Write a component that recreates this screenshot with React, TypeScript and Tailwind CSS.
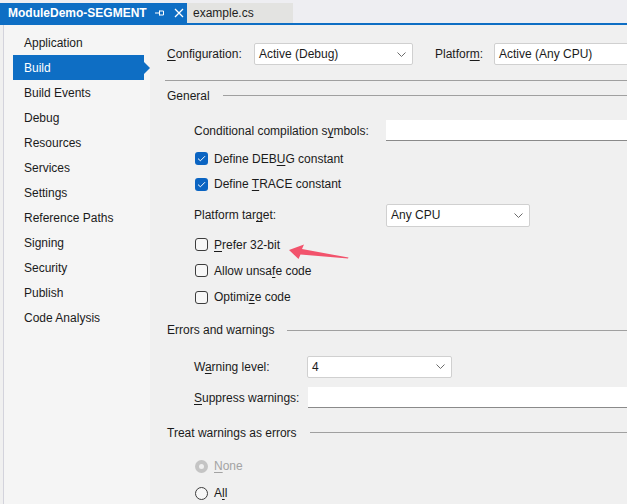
import React from 'react';

const font = { fontFamily: '"Liberation Sans", Arial, sans-serif' };

const navItems = [
  'Application',
  'Build',
  'Build Events',
  'Debug',
  'Resources',
  'Services',
  'Settings',
  'Reference Paths',
  'Signing',
  'Security',
  'Publish',
  'Code Analysis',
];

// access-key underline
const K: React.FC<{ children: React.ReactNode }> = ({ children }) => (
  <span className="underline underline-offset-2 decoration-1">{children}</span>
);

const Chevron = () => (
  <svg width="9" height="5" viewBox="0 0 9 5" className="shrink-0">
    <path d="M0.5 0.5 L4.5 4.5 L8.5 0.5" fill="none" stroke="#6b6b6b" strokeWidth="1" />
  </svg>
);

const Select: React.FC<{ value: string; className: string }> = ({ value, className }) => (
  <div
    className={`flex items-center justify-between bg-white border border-[#d0d0d0] rounded-[2px] pl-[4px] pr-[6px] text-[#1b1b1b] shrink-0 ${className}`}
  >
    <span>{value}</span>
    <Chevron />
  </div>
);

const TextBox: React.FC<{ className: string }> = ({ className }) => (
  <div className={`bg-white border-b border-[#8a8a8a] shrink-0 ${className}`} />
);

const Check: React.FC<{ checked?: boolean; children: React.ReactNode; className?: string }> = ({
  checked,
  children,
  className = '',
}) => (
  <div className={`flex items-center h-[22px] pl-[45px] ${className}`}>
    {checked ? (
      <span className="w-[13px] h-[13px] rounded-[3px] bg-[#0a64c2] flex items-center justify-center">
        <svg width="9" height="7" viewBox="0 0 9 7">
          <path d="M1 3.6 L3.4 5.8 L8 1.2" fill="none" stroke="#fff" strokeWidth="1" />
        </svg>
      </span>
    ) : (
      <span className="w-[13px] h-[13px] rounded-[3px] border border-[#3c3c3c] bg-[#f7f7f7]" />
    )}
    <span className="ml-[6px] text-[#1b1b1b]">{children}</span>
  </div>
);

const Section: React.FC<{ title: string; className?: string }> = ({ title, className = '' }) => (
  <div className={`flex items-center h-[20px] pl-[17px] ${className}`}>
    <span className="text-[#1b1b1b] whitespace-nowrap">{title}</span>
    <div className="flex-1 h-px bg-[#a0a0a0] ml-[13px]" />
  </div>
);

export default function App() {
  return (
    <div className="relative w-[627px] h-[504px] overflow-hidden bg-[#f0f0f0] text-[12px]" style={font}>
      {/* tab strip */}
      <div className="flex h-[23px] bg-[#eeeef2] pt-[3px]">
        <div className="flex items-center w-[187px] bg-[#0e6ec4] pl-[8px] text-white font-bold">
          <span>ModuleDemo-SEGMENT</span>
          <svg width="9" height="8" viewBox="0 0 9 8" className="ml-[8px]">
            <path d="M0 4 H4 M4.5 1.5 V6.5 M4.5 2 H8.5 V6 H4.5" fill="none" stroke="#fff" strokeWidth="1" />
          </svg>
          <svg width="10" height="10" viewBox="0 0 10 10" className="ml-[10px]">
            <path d="M1 1 L9 9 M9 1 L1 9" fill="none" stroke="#fff" strokeWidth="1.3" />
          </svg>
        </div>
        <div className="flex items-center w-[106px] bg-[#e3e3e1] pl-[6px] text-[#1e1e1e]">example.cs</div>
      </div>
      <div className="h-[2px] bg-[#0e6ec4]" />

      <div className="flex h-[479px]">
        {/* left nav */}
        <div className="ml-[3px] w-[147px] border-l border-[#d3d3dc] bg-[#f5f5f5] pt-[5px] shrink-0">
          {navItems.map((item) => {
            const active = item === 'Build';
            return (
              <div key={item} className="flex items-center h-[25px]">
                <div
                  className={`flex items-center h-full w-[131px] ml-[9px] pl-[11px] ${
                    active ? 'bg-[#0e6ec4] text-white' : 'text-[#1b1b1b]'
                  }`}
                >
                  {item}
                </div>
                {active && (
                  <svg width="6" height="12" viewBox="0 0 6 12">
                    <path d="M0 0 L6 6 L0 12 Z" fill="#0e6ec4" />
                  </svg>
                )}
              </div>
            );
          })}
        </div>

        {/* property page */}
        <div className="flex-1 flex flex-col pt-[18px] whitespace-nowrap">
          <div className="flex items-center h-[22px] pl-[17px] text-[#1b1b1b]">
            <span className="w-[87px] shrink-0">
              <K>C</K>onfiguration:
            </span>
            <Select value="Active (Debug)" className="w-[159px] h-[22px]" />
            <span className="w-[59px] ml-[22px] shrink-0">
              Platfor<K>m</K>:
            </span>
            <Select value="Active (Any CPU)" className="w-[180px] h-[22px]" />
          </div>

          <div className="h-px bg-[#a0a0a0] ml-[15px] mt-[15px]" />

          <Section title="General" className="mt-[5px]" />

          <div className="flex items-center h-[21px] mt-[15px] pl-[44px] text-[#1b1b1b]">
            <span className="w-[192px] shrink-0">
              Conditional compilation s<K>y</K>mbols:
            </span>
            <TextBox className="w-[260px] h-[21px]" />
          </div>

          <Check checked className="mt-[7px]">
            Define DEB<K>U</K>G constant
          </Check>
          <Check checked className="mt-[4px]">
            Define <K>T</K>RACE constant
          </Check>

          <div className="flex items-center h-[23px] mt-[9px] pl-[44px] text-[#1b1b1b]">
            <span className="w-[192px] shrink-0">
              Platform tar<K>g</K>et:
            </span>
            <Select value="Any CPU" className="w-[144px] h-[23px]" />
          </div>

          <Check className="mt-[7px]">
            <K>P</K>refer 32-bit
          </Check>
          <Check className="mt-[5px]">
            Allow unsa<K>f</K>e code
          </Check>
          <Check className="mt-[5px]">
            Optimi<K>z</K>e code
          </Check>

          <Section title="Errors and warnings" className="mt-[13px]" />

          <div className="flex items-center h-[21px] mt-[16px] pl-[44px] text-[#1b1b1b]">
            <span className="w-[113px] shrink-0">
              W<K>a</K>rning level:
            </span>
            <Select value="4" className="w-[145px] h-[22px]" />
          </div>
          <div className="flex items-center h-[21px] mt-[10px] pl-[44px] text-[#1b1b1b]">
            <span className="w-[114px] shrink-0">
              <K>S</K>uppress warnings:
            </span>
            <TextBox className="w-[340px] h-[21px]" />
          </div>

          <Section title="Treat warnings as errors" className="mt-[15px]" />

          <div className="flex items-center h-[22px] mt-[13px] pl-[45px]">
            <span className="w-[13px] h-[13px] rounded-full bg-[#c4c4c4] flex items-center justify-center">
              <span className="w-[5px] h-[5px] rounded-full bg-[#efefef]" />
            </span>
            <span className="ml-[6px] text-[#a3a3a3]">
              <K>N</K>one
            </span>
          </div>
          <div className="flex items-center h-[22px] mt-[6px] pl-[45px]">
            <span className="w-[13px] h-[13px] rounded-full border border-[#3c3c3c] bg-[#f7f7f7]" />
            <span className="ml-[6px] text-[#1b1b1b]">
              A<K>l</K>l
            </span>
          </div>
        </div>
      </div>

      {/* red annotation arrow */}
      <svg className="absolute left-0 top-0 pointer-events-none" width="627" height="504" viewBox="0 0 627 504">
        <path
          d="M289 250 L304 244.5 L302 249 L348.5 257.6 L348 258.6 L300.5 254.5 L298.5 259 Z"
          fill="#f2536c"
        />
      </svg>
    </div>
  );
}
